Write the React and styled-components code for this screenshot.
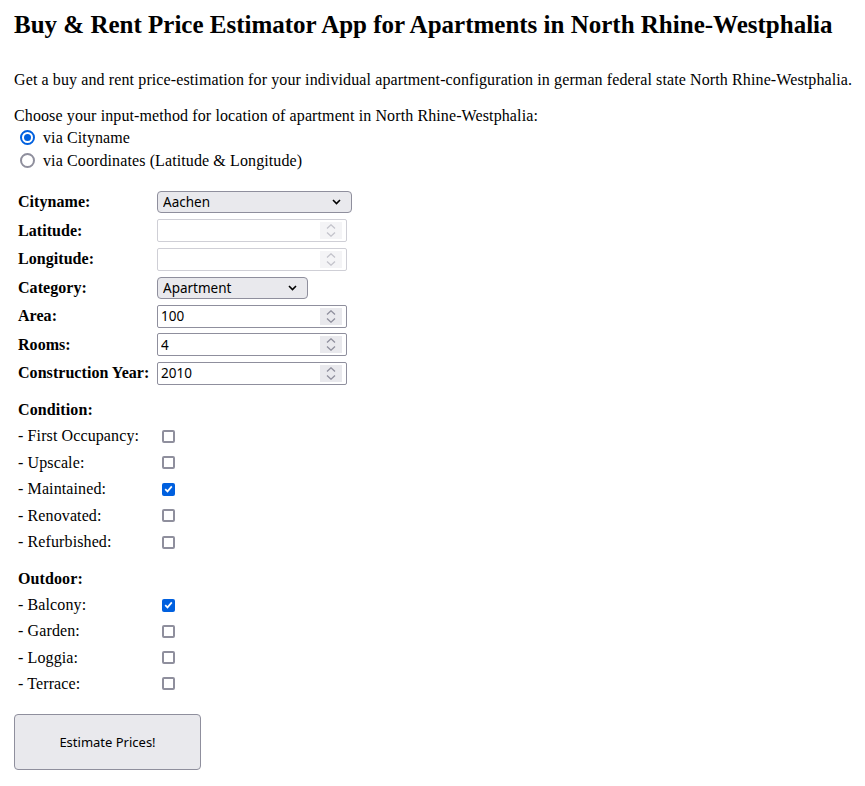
import React, { useState } from 'react';
import styled, { createGlobalStyle } from 'styled-components';

const GlobalStyle = createGlobalStyle`
  body {
    margin: 0;
    background: #ffffff;
    color: #000000;
    font-family: "Liberation Serif", "Times New Roman", serif;
    font-size: 16px;
    letter-spacing: 0.11px;
  }
`;

const Page = styled.div`
  padding: 11px 14px 16px;
  display: flex;
  flex-direction: column;
`;

const Title = styled.h1`
  margin: 0;
  font-size: 25px;
  line-height: 28px;
  font-weight: bold;
  letter-spacing: 0;
`;

const Text = styled.p`
  margin: ${(p) => p.$top || 0}px 0 0;
  line-height: 18px;
  white-space: nowrap;
`;

const RadioList = styled.div`
  display: flex;
  flex-direction: column;
  margin-top: 1px;
`;

const RadioRow = styled.label`
  display: flex;
  align-items: center;
  height: 23px;
  gap: 8px;
  padding-left: 6px;
`;

const RadioDot = styled.span`
  box-sizing: border-box;
  width: 15px;
  height: 15px;
  border-radius: 50%;
  border: 2px solid ${(p) => (p.$on ? '#0060df' : '#8f8f9d')};
  display: flex;
  align-items: center;
  justify-content: center;
  &::after {
    content: '';
    width: 7px;
    height: 7px;
    border-radius: 50%;
    background: ${(p) => (p.$on ? '#0060df' : 'transparent')};
  }
`;

const FormGrid = styled.div`
  margin-top: 19px;
  padding-left: 4px;
  display: grid;
  grid-template-columns: 139px auto;
  grid-auto-rows: 22px;
  row-gap: 6.5px;
  align-items: center;
  justify-items: start;
`;

const FieldLabel = styled.span`
  font-weight: bold;
  line-height: 18px;
  letter-spacing: 0.05px;
`;

const SelectBox = styled.div`
  box-sizing: border-box;
  width: ${(p) => p.$w}px;
  height: 22px;
  display: flex;
  align-items: center;
  padding: 0 10px 0 5px;
  background: #e9e9ed;
  border: 1px solid #8f8f9d;
  border-radius: 4px;
  font-family: "Noto Sans", "Open Sans", sans-serif;
  font-size: 13.5px;
  letter-spacing: 0;

  & select {
    flex: 1;
    appearance: none;
    border: none;
    background: transparent;
    font: inherit;
    color: #000;
    padding: 0;
    outline: none;
  }
`;

const NumberBox = styled.div`
  box-sizing: border-box;
  width: 190px;
  height: 23px;
  display: flex;
  align-items: stretch;
  padding: 2px 4px 2px 2px;
  background: #fff;
  border: 1px solid ${(p) => (p.$disabled ? '#cfcfd6' : '#8f8f9d')};
  border-radius: 2px;

  & input {
    flex: 1;
    min-width: 0;
    border: none;
    outline: none;
    padding: 0 0 0 1px;
    background: transparent;
    font-family: "Noto Sans", "Open Sans", sans-serif;
    font-size: 13.5px;
    letter-spacing: 0;
    color: #000;
  }
`;

const Spin = styled.div`
  width: 22px;
  display: flex;
  flex-direction: column;
  align-items: center;
  justify-content: center;
  gap: 3px;
  background: ${(p) => (p.$disabled ? '#f4f4f6' : '#e9e9ed')};
  color: ${(p) => (p.$disabled ? '#c4c4cc' : '#8f8f9d')};
`;

const Section = styled.div`
  margin-top: ${(p) => p.$top}px;
  padding-left: 4px;
  display: grid;
  grid-template-columns: 144px 13px;
  grid-auto-rows: 18px;
  row-gap: ${(p) => p.$gap}px;
  align-items: center;
`;

const SectionHead = styled.span`
  grid-column: 1 / -1;
  font-weight: bold;
  line-height: 18px;
`;

const OptionLabel = styled.span`
  line-height: 18px;
  white-space: nowrap;
`;

const Check = styled.span`
  box-sizing: border-box;
  width: 13px;
  height: 13px;
  border-radius: 2px;
  border: ${(p) => (p.$on ? 'none' : '2px solid #8f8f9d')};
  background: ${(p) => (p.$on ? '#0060df' : '#fff')};
  display: flex;
  align-items: center;
  justify-content: center;
`;

const Button = styled.button`
  margin-top: 21px;
  width: 187px;
  height: 56px;
  background: #e9e9ed;
  border: 1px solid #8f8f9d;
  border-radius: 4px;
  font-family: "Noto Sans", "Open Sans", sans-serif;
  font-size: 13px;
  letter-spacing: 0;
  color: #000;
  padding: 0;
`;

function Chevron() {
  return (
    <svg width="9" height="6" viewBox="0 0 9 6">
      <path d="M1 1l3.5 3.5L8 1" fill="none" stroke="#000" strokeWidth="1.6" />
    </svg>
  );
}

function SpinArrows({ disabled }) {
  return (
    <Spin $disabled={disabled}>
      <svg width="10" height="5" viewBox="0 0 10 5">
        <path d="M1 4.5L5 0.8l4 3.7" fill="none" stroke="currentColor" strokeWidth="1.3" />
      </svg>
      <svg width="10" height="5" viewBox="0 0 10 5">
        <path d="M1 0.5L5 4.2l4-3.7" fill="none" stroke="currentColor" strokeWidth="1.3" />
      </svg>
    </Spin>
  );
}

function NumberField({ value, disabled }) {
  return (
    <NumberBox $disabled={disabled}>
      <input type="text" defaultValue={value} disabled={disabled} />
      <SpinArrows disabled={disabled} />
    </NumberBox>
  );
}

function Select({ width, options }) {
  return (
    <SelectBox $w={width}>
      <select defaultValue={options[0]}>
        {options.map((o) => (
          <option key={o}>{o}</option>
        ))}
      </select>
      <Chevron />
    </SelectBox>
  );
}

function CheckMark() {
  return (
    <svg width="9" height="8" viewBox="0 0 9 8">
      <path d="M1.2 4.2l2.3 2.2L7.8 1.4" fill="none" stroke="#fff" strokeWidth="1.7" />
    </svg>
  );
}

const conditions = [
  ['First Occupancy', false],
  ['Upscale', false],
  ['Maintained', true],
  ['Renovated', false],
  ['Refurbished', false],
];

const outdoors = [
  ['Balcony', true],
  ['Garden', false],
  ['Loggia', false],
  ['Terrace', false],
];

function OptionGroup({ title, items, top, gap }) {
  return (
    <Section $top={top} $gap={gap}>
      <SectionHead>{title}</SectionHead>
      {items.map(([name, on]) => (
        <React.Fragment key={name}>
          <OptionLabel>- {name}:</OptionLabel>
          <Check $on={on}>{on && <CheckMark />}</Check>
        </React.Fragment>
      ))}
    </Section>
  );
}

export default function App() {
  const [method, setMethod] = useState('city');
  return (
    <Page>
      <GlobalStyle />
      <Title>Buy &amp; Rent Price Estimator App for Apartments in North Rhine-Westphalia</Title>
      <Text $top={32}>
        Get a buy and rent price-estimation for your individual apartment-configuration in german federal state North Rhine-Westphalia.
      </Text>
      <Text $top={18}>Choose your input-method for location of apartment in North Rhine-Westphalia:</Text>
      <RadioList>
        <RadioRow onClick={() => setMethod('city')}>
          <RadioDot $on={method === 'city'} />
          via Cityname
        </RadioRow>
        <RadioRow onClick={() => setMethod('coords')}>
          <RadioDot $on={method === 'coords'} />
          via Coordinates (Latitude &amp; Longitude)
        </RadioRow>
      </RadioList>

      <FormGrid>
        <FieldLabel>Cityname:</FieldLabel>
        <Select width={195} options={['Aachen']} />
        <FieldLabel>Latitude:</FieldLabel>
        <NumberField value="" disabled />
        <FieldLabel>Longitude:</FieldLabel>
        <NumberField value="" disabled />
        <FieldLabel>Category:</FieldLabel>
        <Select width={151} options={['Apartment']} />
        <FieldLabel>Area:</FieldLabel>
        <NumberField value="100" />
        <FieldLabel>Rooms:</FieldLabel>
        <NumberField value="4" />
        <FieldLabel>Construction Year:</FieldLabel>
        <NumberField value="2010" />
      </FormGrid>

      <OptionGroup title="Condition:" items={conditions} top={16.5} gap={8.6} />
      <OptionGroup title="Outdoor:" items={outdoors} top={18.5} gap={8.2} />

      <div>
        <Button type="button">Estimate Prices!</Button>
      </div>
    </Page>
  );
}
